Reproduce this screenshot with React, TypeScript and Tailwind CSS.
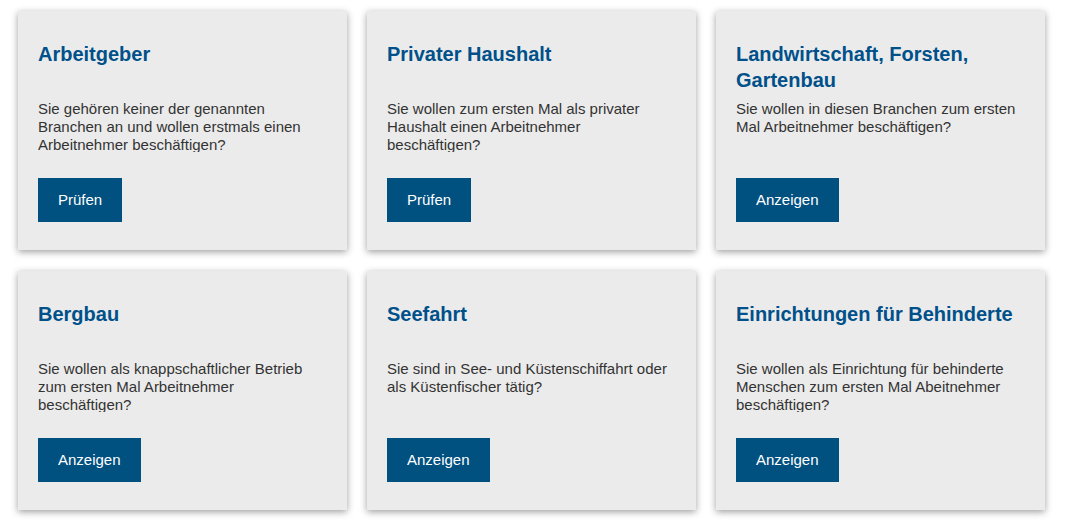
import React from "react";

type Card = { title: string; text: string; button: string };

const cards: Card[] = [
  {
    title: "Arbeitgeber",
    text: "Sie gehören keiner der genannten Branchen an und wollen erstmals einen Arbeitnehmer beschäftigen?",
    button: "Prüfen",
  },
  {
    title: "Privater Haushalt",
    text: "Sie wollen zum ersten Mal als privater Haushalt einen Arbeitnehmer beschäftigen?",
    button: "Prüfen",
  },
  {
    title: "Landwirtschaft, Forsten, Gartenbau",
    text: "Sie wollen in diesen Branchen zum ersten Mal Arbeitnehmer beschäftigen?",
    button: "Anzeigen",
  },
  {
    title: "Bergbau",
    text: "Sie wollen als knappschaftlicher Betrieb zum ersten Mal Arbeitnehmer beschäftigen?",
    button: "Anzeigen",
  },
  {
    title: "Seefahrt",
    text: "Sie sind in See- und Küstenschiffahrt oder als Küstenfischer tätig?",
    button: "Anzeigen",
  },
  {
    title: "Einrichtungen für Behinderte",
    text: "Sie wollen als Einrichtung für behinderte Menschen zum ersten Mal Abeitnehmer beschäftigen?",
    button: "Anzeigen",
  },
];

const App = () => {
  return (
    <div className="min-h-[532px] bg-white pt-[11px] pl-[18px] font-['Liberation_Sans',Arial,sans-serif]">
      <div className="grid grid-cols-[329px_329px_329px] gap-x-5 gap-y-[21px]">
        {cards.map((card) => (
          <div
            key={card.title}
            className="flex h-[239px] flex-col bg-[#ebebeb] px-5 pt-[30px] shadow-[0_2px_7px_rgba(0,0,0,0.38)]"
          >
            <h2 className="h-[52px] text-[20px] font-bold leading-[26px] text-[#00508a]">{card.title}</h2>
            <p className="mt-[7px] h-[52px] overflow-hidden text-[15px] leading-[18px] text-[#333333]">{card.text}</p>
            <div className="mt-[26px]">
              <button className="h-[44px] bg-[#005080] px-5 text-[15px] text-white">{card.button}</button>
            </div>
          </div>
        ))}
      </div>
    </div>
  );
};

export default App;
